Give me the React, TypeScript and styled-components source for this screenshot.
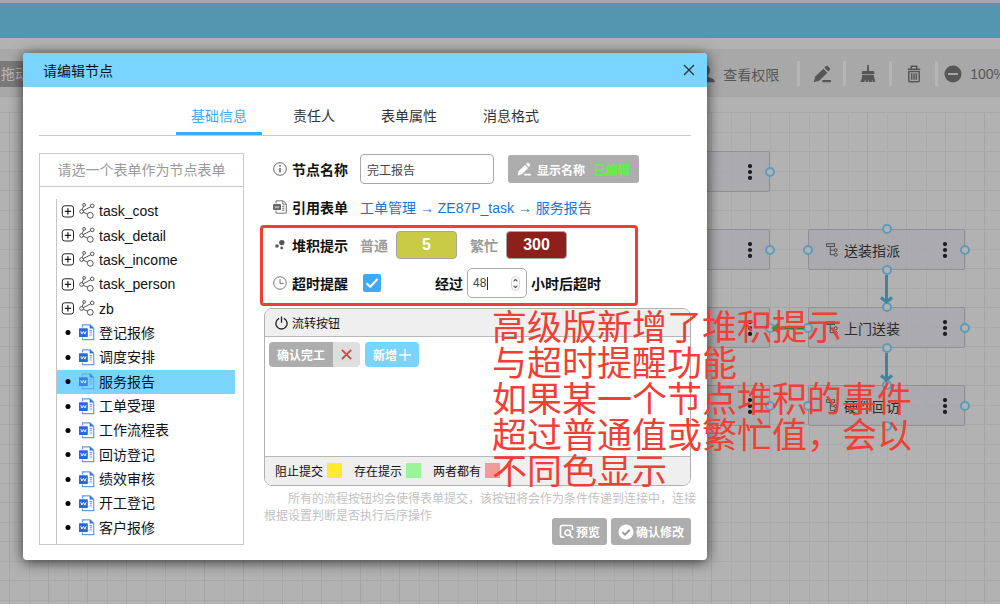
import React, { useState } from "react";
import styled, { createGlobalStyle } from "styled-components";

const GlobalStyle = createGlobalStyle`
  * { box-sizing: border-box; }
  body {
    margin: 0;
    background: #b2b2b2;
    font-family: "Liberation Sans", "Noto Sans CJK SC", sans-serif;
    font-size: 14px;
    color: #111;
  }
  button, input { font-family: inherit; margin: 0; }
`;

/* ---------- page behind the dialog ---------- */

const Page = styled.div`
  position: relative;
  display: flex;
  flex-direction: column;
  min-height: 100vh;
  overflow: hidden;
  background: #b2b2b2;
`;

const AppHeader = styled.header`
  height: 38px;
  flex: none;
  background: #5496b0;
  border-top: 3px solid #a6a6a8;
`;

const Toolbar = styled.div`
  display: flex;
  align-items: center;
  flex: none;
  height: 48px;
  margin-top: 11px;
  padding-top: 2px;
  background: #a8a8a8;
  border-bottom: 1px solid #a3a3a3;
  overflow: hidden;
`;

const DragHint = styled.div`
  flex: none;
  padding: 0 1px;
  line-height: 26px;
  background: #7a7a7a;
  color: #bababa;
`;

const ToolGroup = styled.div`
  display: flex;
  align-items: center;
  flex: none;
  margin-left: auto;
  margin-right: -6px;
  color: #575757;
`;

const ToolButton = styled.button`
  display: flex;
  align-items: center;
  justify-content: center;
  gap: 8px;
  min-width: 43px;
  height: 26px;
  padding: 0;
  border: 0;
  background: none;
  color: inherit;
  font-size: 14px;
`;

const UserButton = styled(ToolButton)`
  margin-right: 18px;
`;

const ZoomControl = styled.div`
  display: flex;
  align-items: center;
  gap: 8px;
  margin-left: 6px;
`;

const ZoomOut = styled(ToolButton)`
  min-width: 18px;
`;

const Divider = styled.span`
  width: 3px;
  height: 25px;
  background: #b5b5b5;
`;

const Canvas = styled.main`
  position: relative;
  flex: 1;
  margin-top: 15px;
  background-image:
    linear-gradient(90deg, #a6a6a6 1px, transparent 1px, transparent 20px, #aaaaaa 20px, #aaaaaa 21px, transparent 21px),
    linear-gradient(#a6a6a6 1px, transparent 1px, transparent 20px, #aaaaaa 20px, #aaaaaa 21px, transparent 21px);
  background-size: 39px 39px;
  background-position: 9px 0;
`;

const Edges = styled.svg`
  position: absolute;
  inset: 0;
  width: 100%;
  height: 100%;
`;

const NodeBox = styled.div<{ $x: number; $y: number }>`
  position: absolute;
  left: ${(p) => p.$x}px;
  top: ${(p) => p.$y}px;
  display: flex;
  align-items: center;
  gap: 6px;
  width: 157px;
  height: 41px;
  padding: 0 16px 0 17px;
  border: 1px solid #919191;
  border-radius: 2px;
  background: rgba(168, 168, 174, 0.8);
  color: #2b2b2b;
`;

const NodeMenu = styled.button`
  display: flex;
  margin-left: auto;
  padding: 0;
  border: 0;
  background: none;
`;

const Port = styled.i<{ $side: "left" | "right" | "top" | "bottom" }>`
  position: absolute;
  width: 10px;
  height: 10px;
  border: 2px solid #5c9cba;
  border-radius: 50%;
  background: #b2b2b4;
  ${(p) => (p.$side === "left" || p.$side === "right" ? `top: 15px; ${p.$side}: -6px;` : `left: 73px; ${p.$side}: -6px;`)}
`;

/* ---------- dialog ---------- */

const Dialog = styled.section`
  position: absolute;
  left: 23px;
  top: 53px;
  width: min(684px, calc(100% - 46px));
  border-radius: 4px;
  background: #fff;
  box-shadow: 0 2px 14px rgba(0, 0, 0, 0.7);
`;

const DialogHeader = styled.header`
  display: flex;
  align-items: center;
  justify-content: space-between;
  height: 34px;
  padding: 0 12px 0 20px;
  border-radius: 4px 4px 0 0;
  background: #79d5ff;
`;

const DialogTitle = styled.h1`
  margin: 0;
  font-size: 14px;
  font-weight: 400;
`;

const IconButton = styled.button`
  display: flex;
  padding: 0;
  border: 0;
  background: none;
  color: #222;
`;

const Tabs = styled.nav`
  display: flex;
  justify-content: center;
  gap: 16px;
  margin: 11px 16px 0;
  border-bottom: 1px solid #c8c8c8;
`;

const Tab = styled.button<{ $active: boolean }>`
  height: 37px;
  padding: 0 15px;
  border: 0;
  border-bottom: 3px solid ${(p) => (p.$active ? "#3fa9f5" : "transparent")};
  background: none;
  color: ${(p) => (p.$active ? "#3fa9f5" : "#333")};
  font-size: 14px;
`;

const DialogBody = styled.div`
  display: flex;
  gap: 20px;
  padding: 17px 16px 15px;
`;

const FormPicker = styled.div`
  display: flex;
  flex-direction: column;
  flex: 0 0 205px;
  border: 1px solid #c9c9c9;
`;

const PickerTitle = styled.div`
  height: 33px;
  line-height: 32px;
  border-bottom: 1px solid #c9c9c9;
  color: #9a9a9a;
  text-align: center;
`;

const Tree = styled.ul`
  display: flex;
  flex-direction: column;
  flex: 1;
  margin: 12px 8px 0 16px;
  padding: 0 0 4px;
  border-left: 1px solid #c4c4c4;
  list-style: none;
`;

const TreeItem = styled.li<{ $selected: boolean }>`
  display: flex;
  flex: 1;
  background: ${(p) => (p.$selected ? "#79d5ff" : "transparent")};
`;

const TreeButton = styled.button`
  display: flex;
  align-items: center;
  gap: 4px;
  width: 100%;
  padding: 0 4px;
  border: 0;
  background: none;
  color: #111;
  font-size: 14px;
  line-height: 20px;
  text-align: left;
`;

const Form = styled.form`
  display: flex;
  flex-direction: column;
  flex: 1;
  min-width: 0;
  padding-top: 1px;
`;

const Fields = styled.div`
  position: relative;
  display: flex;
  flex-direction: column;
  gap: 8px;
`;

const Row = styled.div`
  display: flex;
  align-items: center;
  height: 30px;
  padding-left: 9px;
`;

const FieldLabel = styled.label`
  display: flex;
  align-items: center;
  gap: 5px;
  width: 87px;
  font-weight: 700;
`;

const TextInput = styled.input`
  width: 134px;
  height: 30px;
  padding: 0 6px;
  border: 1px solid #a9a9a9;
  border-radius: 4px;
  color: #444;
  font-size: 12px;
  outline: 0;
`;

const GrayButton = styled.button`
  display: flex;
  align-items: center;
  justify-content: center;
  height: 27px;
  padding: 0 7px;
  border: 0;
  border-radius: 3px;
  background: #adadad;
  color: #fff;
  font-size: 12px;
  font-weight: 700;
`;

const DisplayNameButton = styled(GrayButton)`
  width: 131px;
  height: 28px;
  margin-left: 14px;
  gap: 6px;
`;

const Edited = styled.strong`
  margin-left: 3px;
  color: #5ff04c;
`;

const FormPath = styled.a`
  color: #1b74d4;
  text-decoration: none;
`;

const Level = styled.label`
  display: flex;
  align-items: center;
  gap: 8px;
  margin-right: 13px;
  color: #9b9b9b;
  font-weight: 700;
`;

const LevelInput = styled.input<{ $fill: string }>`
  width: 61px;
  height: 28px;
  padding: 0;
  border: 1px solid #a4a4a4;
  border-radius: 4px;
  background: ${(p) => p.$fill};
  color: #fff;
  font-size: 16px;
  font-weight: 700;
  text-align: center;
`;

const CheckBox = styled.input`
  appearance: none;
  width: 18px;
  height: 18px;
  margin: 0 54px 0 3px;
  border-radius: 2px;
  background: #fff;
  box-shadow: inset 0 0 0 1px #a9a9a9;
  &:checked {
    box-shadow: none;
    background: #41a8f4;
  }
`;

const CheckWrap = styled.span`
  position: relative;
  display: flex;
`;

const CheckMark = styled.svg`
  position: absolute;
  left: 3px;
  top: 0;
  pointer-events: none;
`;

const HoursLabel = styled.label`
  display: flex;
  align-items: center;
  gap: 4px;
  font-weight: 700;
`;

const HoursBox = styled.span`
  display: flex;
  align-items: center;
  width: 60px;
  height: 30px;
  padding: 0 6px 0 5px;
  border: 1px solid #a9a9a9;
  border-radius: 5px;
`;

const HoursInput = styled.input`
  width: 14px;
  padding: 0;
  border: 0;
  color: #444;
  font-size: 12px;
  outline: 0;
  appearance: textfield;
  &::-webkit-inner-spin-button { display: none; }
`;

const Caret = styled.i`
  width: 1px;
  height: 13px;
  margin-right: auto;
  background: #333;
`;

const Highlight = styled.i`
  position: absolute;
  top: 71px;
  bottom: -8px;
  left: -4px;
  width: 378px;
  border: 3px solid #ef3e33;
  border-radius: 4px;
  pointer-events: none;
`;

const Panel = styled.section`
  display: flex;
  flex-direction: column;
  height: 178px;
  margin-top: 10px;
  border: 1px solid #b0b0b0;
  border-radius: 8px;
  overflow: hidden;
  font-size: 12px;
`;

const PanelHeader = styled.h2`
  display: flex;
  align-items: center;
  gap: 4px;
  height: 28px;
  margin: 0;
  padding: 0 10px;
  border-bottom: 1px solid #b8b8b8;
  background: #efefef;
  font-size: 12px;
  font-weight: 400;
`;

const PanelBody = styled.div`
  display: flex;
  align-items: flex-start;
  flex: 1;
  gap: 5px;
  padding: 5px 4px;
`;

const Flow = styled.div`
  display: flex;
  border-radius: 4px;
  overflow: hidden;
`;

const FlowButton = styled.button<{ $fill: string }>`
  display: flex;
  align-items: center;
  gap: 2px;
  height: 25px;
  padding: 0 8px;
  border: 0;
  background: ${(p) => p.$fill};
  color: #fff;
  font-size: 12px;
  font-weight: 700;
`;

const Legend = styled.footer`
  display: flex;
  align-items: center;
  gap: 12px;
  height: 29px;
  padding: 0 10px 2px;
  border-top: 1px solid #b8b8b8;
  background: #efefef;
`;

const LegendItem = styled.span`
  display: flex;
  align-items: center;
  gap: 4px;
`;

const Swatch = styled.i<{ $fill: string }>`
  width: 15px;
  height: 15px;
  background: ${(p) => p.$fill};
`;

const Tip = styled.p`
  margin: 5px -8px 0 0;
  color: #c2c2c2;
  font-size: 12px;
  line-height: 17px;
  text-indent: 2em;
`;

/* The buttons rise beside the short last line of the tip. */
const Actions = styled.div`
  display: flex;
  justify-content: flex-end;
  gap: 4px;
  margin-top: -7px;
`;

const ActionButton = styled(GrayButton)`
  gap: 2px;
  padding: 0 7px;
`;

const Note = styled.aside`
  position: absolute;
  left: 492px;
  top: 310px;
  color: #ee4035;
  font-size: 35px;
  line-height: 36px;
  white-space: nowrap;
`;

const NoteLine = styled.div``;

/* ---------- icons ---------- */

const InfoIcon = () => (
  <svg width="14" height="14" viewBox="0 0 14 14" fill="none" stroke="#666">
    <circle cx="7" cy="7" r="6.3" />
    <path d="M7 6v4.4" strokeWidth="1.5" />
    <circle cx="7" cy="3.9" r=".9" fill="#666" stroke="none" />
  </svg>
);

const FormIcon = () => (
  <svg width="14" height="14" viewBox="0 0 14 14" fill="none" stroke="#777">
    <path d="M3 3.5V.8h7l3.3 3v9.4H3v-2.7M9.8.8v3.4h3.4" />
    <rect x="0" y="4" width="8" height="6" rx="1" fill="#666" stroke="none" />
    <path d="M1.8 6.2l.9 2 1.2-2 1.2 2 .9-2" stroke="#ddd" strokeWidth=".8" />
    <path d="M9 6.2h2.6M9 8.2h2.6M9 10.2h2.6" />
  </svg>
);

const StackIcon = () => (
  <svg width="14" height="14" viewBox="0 0 14 14" fill="#555">
    <circle cx="8.8" cy="4.6" r="2.7" />
    <circle cx="4" cy="8" r="1.8" />
    <circle cx="8.7" cy="10" r="1.4" />
  </svg>
);

const ClockIcon = () => (
  <svg width="14" height="14" viewBox="0 0 14 14" fill="none" stroke="#777">
    <circle cx="7" cy="7" r="6.3" />
    <path d="M7 3v4.5h3.6" />
  </svg>
);

const ExpandIcon = () => (
  <svg width="13" height="13" viewBox="0 0 13 13" fill="none" stroke="#222">
    <rect x="1.3" y=".8" width="11.2" height="11.2" rx="2.4" />
    <path d="M6.900 3.3v6.3M3.800 6.4h6.3" strokeWidth="1.3" />
  </svg>
);

const BulletIcon = () => (
  <svg width="13" height="13" viewBox="0 0 13 13">
    <circle cx="7" cy="6.5" r="2.5" fill="#000" />
  </svg>
);

const ShareIcon = () => (
  <svg width="17" height="17" viewBox="0 0 17 17" fill="none" stroke="#444" strokeWidth=".9">
    <circle cx="3.600" cy="8.500" r="1.900" />
    <circle cx="6.100" cy="1.900" r="1.400" />
    <circle cx="14.200" cy="2.900" r="1.800" />
    <circle cx="12.300" cy="12.300" r="2.900" />
    <path d="M4.200 6.600l1.400-3.400M5.300 7.700l7.200-3.900M5.300 9.300l4.500 1.900" />
  </svg>
);

const WordIcon = ({ muted }: { muted: boolean }) => (
  <svg width="17" height="17" viewBox="0 0 17 17" fill="none" opacity={muted ? 0.75 : 1}>
    <path d="M4.5 3.6V.8h7.6l3.6 3.4v11.5H4.5v-2.3" fill={muted ? "none" : "#fff"} stroke="#6a9be6" strokeWidth="1.2" />
    <path d="M11.7.6v4h4z" fill="#2c6bdb" />
    <rect x="1" y="4.300" width="8.800" height="8.800" rx=".6" fill="#2468dc" />
    <path d="M2.800 7.300l1.100 2.800 1.500-2.600 1.500 2.600 1.100-2.800" stroke="#fff" strokeWidth="1" />
    <path d="M11.500 6.600h2.600M11.500 8.800h2.600M11.500 11h2.600" stroke="#6a9be6" strokeWidth="1.1" />
  </svg>
);

const PencilIcon = ({ size }: { size: number }) => (
  <svg width={size} height={size} viewBox="0 0 18 18" fill="currentColor">
    <path d="M.8 17.2l1.4-5.6L10.4 3.8l4 3.9-8.2 8z" />
    <path d="M11.4 2.8l1.5-1.5c.6-.6 1.4-.6 2 0l1.7 1.7c.6.6.6 1.3 0 1.9l-1.4 1.5z" />
    <rect x="9.2" y="15" width="8.8" height="2.2" rx=".6" />
  </svg>
);

const BrushIcon = () => (
  <svg width="16" height="19" viewBox="0 0 16 19" fill="currentColor">
    <path d="M7.200 1.500C7.200 .5 8.800 .5 8.800 1.500L9.100 7H13Q14.400 7 14.400 8.400V10H1.800V8.400Q1.800 7 3.200 7H6.900Z" />
    <path d="M2.300 10.800H13.600L15.200 18H12.700L12.100 15.500L11.900 18H8.900L8.600 15.500L7.900 18H5.300L5.700 15.300L4 18H.2Q2.200 15 2.300 10.800Z" />
  </svg>
);

const TrashIcon = () => (
  <svg width="14" height="18" viewBox="0 0 14 18" fill="none" stroke="currentColor" strokeWidth="1.5">
    <path d="M4.300 3.500V1.300H9.700V3.500M.8 4.200H13.200M1.800 6.500H12.200V15.600Q12.200 16.800 11 16.800H3Q1.800 16.800 1.800 15.600ZM4.700 8.300V14.800M7 8.300V14.800M9.300 8.300V14.800" />
  </svg>
);

const MinusIcon = () => (
  <svg width="18" height="18" viewBox="0 0 18 18">
    <circle cx="9" cy="9" r="8.5" fill="currentColor" />
    <path d="M4 9h10" stroke="#b0b0b0" strokeWidth="1.8" />
  </svg>
);

const UserIcon = () => (
  <svg width="20" height="18" viewBox="0 0 20 18" fill="currentColor">
    <ellipse cx="10" cy="5.500" rx="4.800" ry="5.500" />
    <path d="M0 17.200C0 14 4 13 7.300 11.800V9H12.700V11.800C16 13 20 14 20 17.200Z" />
  </svg>
);

const FlowIcon = () => (
  <svg width="12" height="14" viewBox="0 0 12 14" fill="none" stroke="#444" strokeWidth=".9">
    <rect x=".6" y=".8" width="8" height="2.600" />
    <path d="M4.300 3.400V11.700H8.200M4.300 7.200H8.200" />
    <circle cx="9.700" cy="7.200" r="1.500" />
    <circle cx="9.700" cy="11.700" r="1.500" />
  </svg>
);

const DotsIcon = () => (
  <svg width="6" height="18" viewBox="0 0 6 18" fill="#1c1c1c">
    <circle cx="3" cy="3.100" r="2.100" />
    <circle cx="3" cy="9" r="2.100" />
    <circle cx="3" cy="14.900" r="2.100" />
  </svg>
);

const CrossIcon = ({ color, size, width }: { color: string; size: number; width: number }) => (
  <svg width={size} height={size} viewBox="0 0 12 12" stroke={color} strokeWidth={width} fill="none">
    <path d="M1 1l10 10M11 1L1 11" />
  </svg>
);

const PowerIcon = () => (
  <svg width="13" height="14" viewBox="0 0 13 14" fill="none" stroke="#222" strokeWidth="1.300">
    <path d="M4.200 2.300A5.600 5.600 0 1 0 8.800 2.300M6.500 .5V6.800" />
  </svg>
);

const PlusIcon = () => (
  <svg width="12" height="12" viewBox="0 0 12 12" stroke="#fff" strokeWidth="1.400">
    <path d="M6 0V12M0 6H12" />
  </svg>
);

const SpinIcon = () => (
  <svg width="9" height="15" viewBox="0 0 9 15" fill="none" stroke="#555" strokeWidth="1.200">
    <rect x=".5" y=".5" width="8" height="14" rx="4" stroke="#c8c8c8" strokeWidth=".8" />
    <path d="M2.600 5.400L4.500 3.400L6.400 5.400M2.600 9.600L4.500 11.600L6.400 9.600" />
  </svg>
);

const PreviewIcon = () => (
  <svg width="15" height="15" viewBox="0 0 15 15" fill="none" stroke="#fff" strokeWidth="1.700">
    <path d="M5.300 13.200H3Q1.500 13.200 1.500 11.700V3Q1.500 1.500 3 1.500H12Q13.500 1.500 13.500 3V6" />
    <circle cx="8.700" cy="8.700" r="2.700" />
    <path d="M10.700 10.700L14 14" />
  </svg>
);

const ConfirmIcon = () => (
  <svg width="16" height="16" viewBox="0 0 16 16" fill="none">
    <circle cx="8" cy="8" r="7.500" fill="#fff" />
    <path d="M4.300 8.100L7 10.700L11.800 5.700" stroke="#999" strokeWidth="2" />
  </svg>
);

/* ---------- data ---------- */

const tables = ["task_cost", "task_detail", "task_income", "task_person", "zb"];
const forms = ["登记报修", "调度安排", "服务报告", "工单受理", "工作流程表", "回访登记", "绩效审核", "开工登记", "客户报修"];
const tabNames = ["基础信息", "责任人", "表单属性", "消息格式"];
const noteLines = ["高级版新增了堆积提示", "与超时提醒功能", "如果某一个节点堆积的事件", "超过普通值或繁忙值，会以", "不同色显示"];
const legend = [
  { text: "阻止提交", fill: "#ffeb2e" },
  { text: "存在提示", fill: "#98f598" },
  { text: "两者都有", fill: "#f19a9a" },
];
const nodes: { x: number; y: number; name?: string }[] = [
  { x: 613, y: 39 },
  { x: 613, y: 117 },
  { x: 613, y: 195 },
  { x: 613, y: 273 },
  { x: 808, y: 117, name: "送装指派" },
  { x: 808, y: 195, name: "上门送装" },
  { x: 808, y: 273, name: "硬件回访" },
];

export default function App() {
  const [tab, setTab] = useState("基础信息");
  const [form, setForm] = useState("服务报告");
  const [remind, setRemind] = useState(true);

  return (
    <Page>
      <GlobalStyle />
      <AppHeader />
      <Toolbar>
        <DragHint>拖动</DragHint>
        <ToolGroup>
          <UserButton><UserIcon />查看权限</UserButton>
          <Divider />
          <ToolButton aria-label="edit"><PencilIcon size={18} /></ToolButton>
          <Divider />
          <ToolButton aria-label="clear"><BrushIcon /></ToolButton>
          <Divider />
          <ToolButton aria-label="delete"><TrashIcon /></ToolButton>
          <Divider />
          <ZoomControl>
            <ZoomOut aria-label="zoom out"><MinusIcon /></ZoomOut>
            <span>100%</span>
          </ZoomControl>
        </ToolGroup>
      </Toolbar>

      <Canvas>
        {nodes.map((n) => (
          <NodeBox key={`${n.x}-${n.y}`} $x={n.x} $y={n.y}>
            {n.name && <FlowIcon />}
            {n.name}
            <NodeMenu aria-label="menu"><DotsIcon /></NodeMenu>
            <Port $side="left" />
            <Port $side="right" />
            <Port $side="top" />
            <Port $side="bottom" />
          </NodeBox>
        ))}
        <Edges fill="none" strokeWidth="3">
          <g stroke="#41849c">
            <path d="M886.500 163V191M881 185.500L886.500 190L892 185.500" />
            <path d="M886.500 241V269M881 263.500L886.500 268L892 263.500" />
          </g>
          <path d="M804 216H775" stroke="#357f3c" />
          <path d="M771 216L779 210L777 216L779 222Z" fill="#3c9a47" />
        </Edges>
      </Canvas>

      <Dialog role="dialog" aria-labelledby="dialog-title">
        <DialogHeader>
          <DialogTitle id="dialog-title">请编辑节点</DialogTitle>
          <IconButton aria-label="close"><CrossIcon color="#333" size={12} width={1.4} /></IconButton>
        </DialogHeader>
        <Tabs>
          {tabNames.map((t) => (
            <Tab key={t} $active={t === tab} onClick={() => setTab(t)}>{t}</Tab>
          ))}
        </Tabs>
        <DialogBody>
          <FormPicker>
            <PickerTitle>请选一个表单作为节点表单</PickerTitle>
            <Tree>
              {tables.map((t) => (
                <TreeItem key={t} $selected={false}>
                  <TreeButton><ExpandIcon /><ShareIcon />{t}</TreeButton>
                </TreeItem>
              ))}
              {forms.map((f) => (
                <TreeItem key={f} $selected={f === form}>
                  <TreeButton onClick={() => setForm(f)}>
                    <BulletIcon /><WordIcon muted={f === form} />{f}
                  </TreeButton>
                </TreeItem>
              ))}
            </Tree>
          </FormPicker>

          <Form onSubmit={(e) => e.preventDefault()}>
            <Fields>
              <Row>
                <FieldLabel htmlFor="node-name"><InfoIcon />节点名称</FieldLabel>
                <TextInput id="node-name" defaultValue="完工报告" />
                <DisplayNameButton type="button">
                  <PencilIcon size={14} />显示名称<Edited>已编辑</Edited>
                </DisplayNameButton>
              </Row>
              <Row>
                <FieldLabel as="span"><FormIcon />引用表单</FieldLabel>
                <FormPath href="#form">工单管理 → ZE87P_task → 服务报告</FormPath>
              </Row>
              <Row>
                <FieldLabel as="span"><StackIcon />堆积提示</FieldLabel>
                <Level>普通<LevelInput $fill="#c9cb45" defaultValue="5" /></Level>
                <Level>繁忙<LevelInput $fill="#8e201b" defaultValue="300" /></Level>
              </Row>
              <Row>
                <FieldLabel htmlFor="remind"><ClockIcon />超时提醒</FieldLabel>
                <CheckWrap>
                  <CheckBox id="remind" type="checkbox" checked={remind} onChange={() => setRemind(!remind)} />
                  {remind && (
                    <CheckMark width="18" height="18" viewBox="0 0 18 18" fill="none" stroke="#fff" strokeWidth="2">
                      <path d="M3.500 9.200L7.200 12.800L14.500 5" />
                    </CheckMark>
                  )}
                </CheckWrap>
                <HoursLabel>
                  经过
                  <HoursBox><HoursInput type="number" defaultValue="48" /><Caret /><SpinIcon /></HoursBox>
                  小时后超时
                </HoursLabel>
              </Row>
              <Highlight />
            </Fields>

            <Panel>
              <PanelHeader><PowerIcon />流转按钮</PanelHeader>
              <PanelBody>
                <Flow>
                  <FlowButton type="button" $fill="#adadad">确认完工</FlowButton>
                  <FlowButton type="button" $fill="#dedede" aria-label="remove"><CrossIcon color="#e2403a" size={11} width={2} /></FlowButton>
                </Flow>
                <Flow>
                  <FlowButton type="button" $fill="#79d5ff">新增<PlusIcon /></FlowButton>
                </Flow>
              </PanelBody>
              <Legend>
                {legend.map((l) => (
                  <LegendItem key={l.text}>{l.text}<Swatch $fill={l.fill} /></LegendItem>
                ))}
              </Legend>
            </Panel>
            <Tip>所有的流程按钮均会使得表单提交，该按钮将会作为条件传递到连接中，连接根据设置判断是否执行后序操作</Tip>
            <Actions>
              <ActionButton type="button"><PreviewIcon />预览</ActionButton>
              <ActionButton type="submit"><ConfirmIcon />确认修改</ActionButton>
            </Actions>
          </Form>
        </DialogBody>
      </Dialog>

      <Note>
        {noteLines.map((l) => <NoteLine key={l}>{l}</NoteLine>)}
      </Note>
    </Page>
  );
}
